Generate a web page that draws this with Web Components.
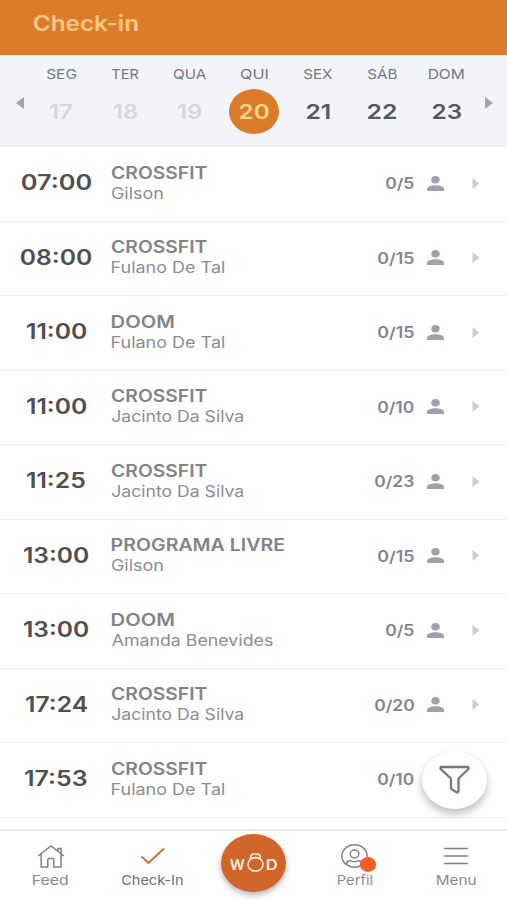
<!DOCTYPE html>
<html lang="pt-BR">
<head>
<meta charset="utf-8">
<title>Check-in</title>
<style>
html,body{margin:0;height:100%;overflow:hidden;background:#fff}
body{font-family:Inter,"Open Sans",sans-serif}
</style>
</head>
<body>
<checkin-app></checkin-app>
<script>
// Single-line label whose ink is stretched to the width in its "w" attribute.
class WideText extends HTMLElement {
  connectedCallback() {
    this.attachShadow({mode:'open'}).innerHTML = `<style>
      :host{display:block;white-space:nowrap;flex:none}
      span{display:inline-block;transform-origin:0 50%}
    </style><span><slot></slot></span>`;
    const w = +this.getAttribute('w');
    const cs = getComputedStyle(this);
    const c = document.createElement('canvas').getContext('2d');
    // Measured at ten times the size, for sub-pixel side bearings.
    c.font = `${cs.fontWeight} ${parseFloat(cs.fontSize) * 10}px ${cs.fontFamily}`;
    const m = c.measureText(this.textContent);
    const left = m.actualBoundingBoxLeft / 10;
    const k = w / (left + m.actualBoundingBoxRight / 10);
    this.style.width = w + 'px';
    this.shadowRoot.querySelector('span').style.transform =
      `translateX(${left * k}px) scaleX(${k})`;
  }
}

class AppHeader extends HTMLElement {
  connectedCallback() {
    this.attachShadow({mode:'open'}).innerHTML = `<style>
      :host{display:flex;box-sizing:border-box;height:55px;padding:8px 0 0 34px;background:#dc7c2b;
        color:#fdc982;font-size:21.5px;line-height:31px;font-weight:600}
    </style><wide-text w="103.5">${this.getAttribute('label')}</wide-text>`;
  }
}

class WeekDay extends HTMLElement {
  connectedCallback() {
    const [d, dw, n, nw] = this.getAttribute('data').split(',');
    this.attachShadow({mode:'open'}).innerHTML = `<style>
      :host{display:flex;flex-direction:column;align-items:center}
      .d{font-size:13.7px;line-height:18px;font-weight:400;color:#77777d}
      .n{display:flex;align-items:center;justify-content:center;width:50px;height:45px;margin-top:6px;
        border-radius:50%;font-size:20.5px;line-height:44px;font-weight:600;color:#58585c}
      :host([past]) .n{color:#d7d8dc}
      :host([on]) .n{background:#dc7c2b;color:#fdd386}
    </style><wide-text class="d" w="${dw}">${d}</wide-text>
    <div class="n"><wide-text w="${nw}">${n}</wide-text></div>`;
  }
}

class WeekStrip extends HTMLElement {
  connectedCallback() {
    this.attachShadow({mode:'open'}).innerHTML = `<style>
      :host{display:flex;box-sizing:border-box;height:92px;padding:10px 14px 0 16px;background:#f3f4f9;
        border-bottom:2px solid #ecedf1;border-top:1px solid #f9efe9}
      svg{width:8px;height:12px;margin-top:31px;flex:none;fill:#a2a3ab}
      .days{flex:1;display:grid;grid-template-columns:repeat(7,64.25px);margin:-1px 6px 0 5px}
    </style>
    <svg viewBox="0 0 8 12"><path d="M8 0V12L0 6z"/></svg>
    <div class="days">
      <week-day past data="SEG,29,17,22"></week-day><week-day past data="TER,26.5,18,23"></week-day>
      <week-day past data="QUA,32,19,23"></week-day><week-day on data="QUI,26.5,20,28.5"></week-day>
      <week-day data="SEX,28,21,22.5"></week-day><week-day data="SÁB,28.5,22,28"></week-day>
      <week-day data="DOM,34.5,23,28"></week-day>
    </div>
    <svg viewBox="0 0 8 12"><path d="M0 0V12L8 6z"/></svg>`;
  }
}

class ClassRow extends HTMLElement {
  connectedCallback() {
    const [t, tw, n, nw, p, pw, c, cw] = this.getAttribute('data').split(',');
    this.attachShadow({mode:'open'}).innerHTML = `<style>
      :host{display:flex;box-sizing:border-box;height:74.5px;border-bottom:1.5px solid #f0f0f2;padding-right:27px}
      .time{width:112px;display:flex;justify-content:center;font-size:21px;line-height:71px;font-weight:600;color:#4f4f51}
      .info{flex:1;padding:14.8px 0 0 .4px}
      .n{font-size:17px;line-height:22px;font-weight:600;color:#82828a}
      .p{font-size:15.5px;line-height:20px;font-weight:400;color:#8c8c93;margin-top:-.3px}
      .c{font-size:15.3px;line-height:73px;font-weight:600;color:#85858c}
      .u{width:17px;height:15px;margin:28.8px 28px 0 13.2px;fill:#a0a0aa}
      .a{width:8px;height:11px;margin-top:30.8px;fill:#cdced1}
    </style>
    <div class="time"><wide-text w="${tw}">${t}</wide-text></div>
    <div class="info"><wide-text class="n" w="${nw}">${n}</wide-text><wide-text class="p" w="${pw}">${p}</wide-text></div>
    <wide-text class="c" w="${cw}">${c}</wide-text>
    <svg class="u" viewBox="0 0 17 15"><ellipse cx="8.5" cy="3.8" rx="4.2" ry="3.8"/><path d="M0 15V12.8C0 10.4 4.5 9.2 8.5 9.2S17 10.4 17 12.8V15z"/></svg>
    <svg class="a" viewBox="0 0 8 11"><path d="M.5 0V11L7.5 5.5z"/></svg>`;
  }
}

class NavItem extends HTMLElement {
  connectedCallback() {
    this.attachShadow({mode:'open'}).innerHTML = `<style>
      :host{display:flex;flex-direction:column;align-items:center;position:relative;
        font-size:13.4px;line-height:18px;font-weight:400;color:#8a8a91}
      :host([on]){color:#6d6d73}
      .i{height:28px;padding-top:12px;display:flex}
    </style><div class="i"><slot></slot></div>
    <wide-text w="${this.getAttribute('w')}">${this.getAttribute('label')}</wide-text>`;
  }
}

class WodButton extends HTMLElement {
  connectedCallback() {
    this.attachShadow({mode:'open'}).innerHTML = `<style>
      :host{display:flex;align-items:center;justify-content:center;gap:2.5px;justify-self:center;box-sizing:border-box;width:65px;height:58px;margin-top:3px;
        border-radius:50%;background:#d1662a;box-shadow:0 3px 6px rgba(0,0,0,.3);
        color:#ffeedd;font-size:14.5px;line-height:20px;font-weight:600;padding-top:3px}
      svg{width:17px;height:19px;margin-top:-4px;fill:none;stroke:#ffeedd;stroke-width:1.5}
    </style><wide-text w="14.5">W</wide-text>
    <svg viewBox="0 0 17 19"><ellipse cx="8.5" cy="11.3" rx="7.6" ry="6.8"/><path d="M3.6 6V4Q3.8 1 7 .9H10Q13.2 1 13.4 4V6M5 5.4Q8.5 3.6 12 5.4"/></svg>
    <wide-text w="10">D</wide-text>`;
  }
}

class BottomNav extends HTMLElement {
  connectedCallback() {
    this.attachShadow({mode:'open'}).innerHTML = `<style>
      :host{display:grid;grid-template-columns:repeat(5,1fr);box-sizing:border-box;height:71px;
        border-top:2px solid #e9e9ea;background:#fff;position:relative}
      svg{fill:none;stroke:#80808a;stroke-width:1.5;overflow:visible}
      .dot{position:absolute;left:55.5px;top:26px;width:16.5px;height:15px;border-radius:50%;background:#f95b22}
    </style>
    <nav-item label="Feed" w="34.5"><svg width="28" height="25" viewBox="0 0 28 25"><path d="M1 13L14 3L27 13M4.2 11V24H10.800V16.500Q10.800 15.500 11.800 15.500H15.800Q16.800 15.500 16.800 16.500V24H24V5.500H21V8.200"/></svg></nav-item>
    <nav-item on label="Check-In" w="60.5"><svg width="25" height="25" viewBox="0 0 25 25" style="stroke:#bd713d;stroke-width:1.8"><path d="M1.500 13.500L8.500 20L24 5.500"/></svg></nav-item>
    <wod-button></wod-button>
    <nav-item label="Perfil" w="34"><svg width="27" height="25" viewBox="0 0 27 25"><ellipse cx="13.500" cy="13" rx="12.600" ry="11.200"/><ellipse cx="13.500" cy="11" rx="4.300" ry="3.900"/><path d="M5.300 21.500V20.500Q6 17.700 9.500 17.700Q13.500 19.700 17.500 17.700Q21 17.700 21.700 20.500V21.500"/></svg><i class="dot"></i></nav-item>
    <nav-item label="Menu" w="38.5"><svg width="24" height="25" viewBox="0 0 24 25"><path d="M0 5.500H24M0 13H24M0 20.500H24"/></svg></nav-item>`;
  }
}

class FilterButton extends HTMLElement {
  connectedCallback() {
    this.attachShadow({mode:'open'}).innerHTML = `<style>
      :host{position:absolute;left:422px;top:751px;width:65px;height:58px;border-radius:50%;background:#fff;
        box-shadow:0 5px 8px rgba(0,0,0,.25),0 0 2px rgba(0,0,0,.05);display:flex;align-items:center;justify-content:center}
      svg{width:31px;height:29px;margin-top:-1px;fill:none;stroke:#777783;stroke-width:2.3;stroke-linejoin:round}
    </style><svg viewBox="0 0 31 29"><path d="M2.500 2H28.500Q30 2 29.500 4L19.500 13.500V25.500Q19.300 27.800 17.500 27.300L13 24.500Q12 24 12 22.500V13.500L1.700 4.200Q1 2 2.500 2z"/></svg>`;
  }
}

class CheckinApp extends HTMLElement {
  connectedCallback() {
    const rows = [
      '07:00,69,CROSSFIT,94.5,Gilson,50.5,0/5,27.5',
      '08:00,70,CROSSFIT,94.5,Fulano De Tal,112,0/15,35.5',
      '11:00,59,DOOM,61.5,Fulano De Tal,112,0/15,35.5',
      '11:00,59,CROSSFIT,94.5,Jacinto Da Silva,131,0/10,35.5',
      '11:25,57.5,CROSSFIT,94.5,Jacinto Da Silva,131,0/23,38.5',
      '13:00,64,PROGRAMA LIVRE,172,Gilson,50.5,0/15,35.5',
      '13:00,64,DOOM,61.5,Amanda Benevides,160.5,0/5,27.5',
      '17:24,61,CROSSFIT,94.5,Jacinto Da Silva,131,0/20,39',
      '17:53,61.5,CROSSFIT,94.5,Fulano De Tal,112,0/10,35.5'];
    this.attachShadow({mode:'open'}).innerHTML = `<style>
      :host{display:flex;flex-direction:column;position:relative;width:507px;height:900px;overflow:hidden;background:#fff}
      main{flex:1;min-height:0;overflow:hidden}
    </style>
    <app-header label="Check-in"></app-header>
    <week-strip></week-strip>
    <main>${rows.map(r => `<class-row data="${r}"></class-row>`).join('')}</main>
    <filter-button></filter-button>
    <bottom-nav></bottom-nav>`;
  }
}

customElements.define('wide-text', WideText);
customElements.define('app-header', AppHeader);
customElements.define('week-day', WeekDay);
customElements.define('week-strip', WeekStrip);
customElements.define('class-row', ClassRow);
customElements.define('nav-item', NavItem);
customElements.define('wod-button', WodButton);
customElements.define('bottom-nav', BottomNav);
customElements.define('filter-button', FilterButton);
customElements.define('checkin-app', CheckinApp);
</script>
</body>
</html>
